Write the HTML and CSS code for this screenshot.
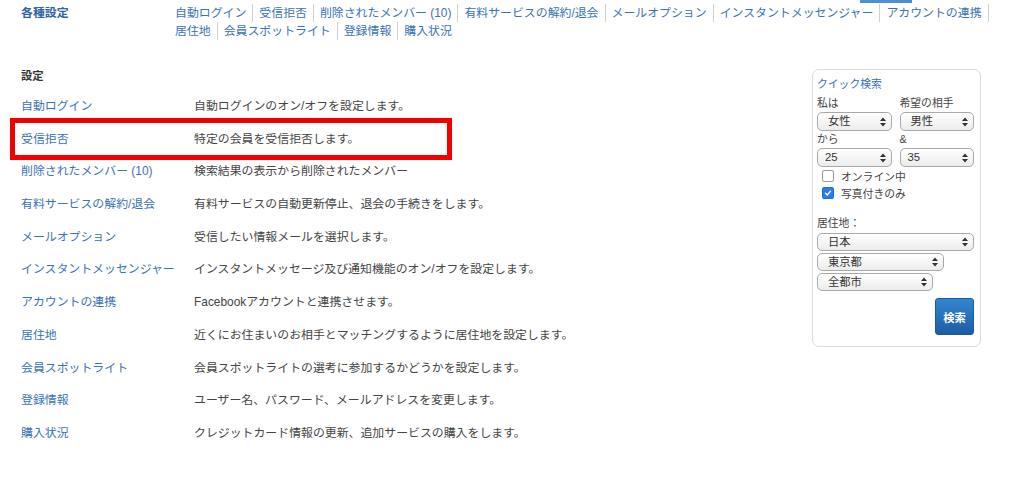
FILE: index.html
```html
<!DOCTYPE html>
<html lang="ja">
<head>
<meta charset="utf-8">
<title>各種設定</title>
<link rel="stylesheet" href="styles.css">
</head>
<body>
<div class="page">
  <div class="tab-indicator"></div>
  <header class="header">
    <div class="title">各種設定</div>
    <nav class="nav">
      <a class="nav-item">自動ログイン</a>
      <a class="nav-item">受信拒否</a>
      <a class="nav-item">削除されたメンバー (10)</a>
      <a class="nav-item">有料サービスの解約/退会</a>
      <a class="nav-item">メールオプション</a>
      <a class="nav-item">インスタントメッセンジャー</a>
      <a class="nav-item">アカウントの連携</a>
      <a class="nav-item">居住地</a>
      <a class="nav-item">会員スポットライト</a>
      <a class="nav-item">登録情報</a>
      <a class="nav-item">購入状況</a>
    </nav>
  </header>

  <main class="main">
    <section class="settings">
      <h2 class="settings-heading">設定</h2>
      <div class="row"><a class="row-link">自動ログイン</a><span class="row-desc">自動ログインのオン/オフを設定します。</span></div>
      <div class="row row-marked"><a class="row-link">受信拒否</a><span class="row-desc">特定の会員を受信拒否します。</span><span class="highlight"></span></div>
      <div class="row"><a class="row-link">削除されたメンバー (10)</a><span class="row-desc">検索結果の表示から削除されたメンバー</span></div>
      <div class="row"><a class="row-link">有料サービスの解約/退会</a><span class="row-desc">有料サービスの自動更新停止、退会の手続きをします。</span></div>
      <div class="row"><a class="row-link">メールオプション</a><span class="row-desc">受信したい情報メールを選択します。</span></div>
      <div class="row"><a class="row-link">インスタントメッセンジャー</a><span class="row-desc">インスタントメッセージ及び通知機能のオン/オフを設定します。</span></div>
      <div class="row"><a class="row-link">アカウントの連携</a><span class="row-desc">Facebookアカウントと連携させます。</span></div>
      <div class="row"><a class="row-link">居住地</a><span class="row-desc">近くにお住まいのお相手とマッチングするように居住地を設定します。</span></div>
      <div class="row"><a class="row-link">会員スポットライト</a><span class="row-desc">会員スポットライトの選考に参加するかどうかを設定します。</span></div>
      <div class="row"><a class="row-link">登録情報</a><span class="row-desc">ユーザー名、パスワード、メールアドレスを変更します。</span></div>
      <div class="row"><a class="row-link">購入状況</a><span class="row-desc">クレジットカード情報の更新、追加サービスの購入をします。</span></div>
    </section>

    <aside class="quick">
      <div class="quick-title">クイック検索</div>
      <div class="pair">
        <div class="field">
          <div class="label">私は</div>
          <div class="sel sel-half"><span>女性</span><svg class="arr" viewBox="0 0 6 10" width="6" height="10"><path d="M0 4 L3 0.5 L6 4 Z M0 6 L3 9.5 L6 6 Z" fill="#333"/></svg></div>
        </div>
        <div class="field">
          <div class="label">希望の相手</div>
          <div class="sel sel-half"><span>男性</span><svg class="arr" viewBox="0 0 6 10" width="6" height="10"><path d="M0 4 L3 0.5 L6 4 Z M0 6 L3 9.5 L6 6 Z" fill="#333"/></svg></div>
        </div>
      </div>
      <div class="pair">
        <div class="field">
          <div class="label">から</div>
          <div class="sel sel-half sel-num"><span>25</span><svg class="arr" viewBox="0 0 6 10" width="6" height="10"><path d="M0 4 L3 0.5 L6 4 Z M0 6 L3 9.5 L6 6 Z" fill="#333"/></svg></div>
        </div>
        <div class="field">
          <div class="label">&amp;</div>
          <div class="sel sel-half sel-num"><span>35</span><svg class="arr" viewBox="0 0 6 10" width="6" height="10"><path d="M0 4 L3 0.5 L6 4 Z M0 6 L3 9.5 L6 6 Z" fill="#333"/></svg></div>
        </div>
      </div>
      <div class="check"><span class="box"></span>オンライン中</div>
      <div class="check"><span class="box box-on"><svg viewBox="0 0 12 12" width="12" height="12"><path d="M3 6.3 L5.1 8.4 L9 3.8" fill="none" stroke="#fff" stroke-width="1.7" stroke-linecap="round" stroke-linejoin="round"/></svg></span>写真付きのみ</div>
      <div class="label label-area">居住地：</div>
      <div class="sel sel-full"><span>日本</span><svg class="arr" viewBox="0 0 6 10" width="6" height="10"><path d="M0 4 L3 0.5 L6 4 Z M0 6 L3 9.5 L6 6 Z" fill="#333"/></svg></div>
      <div class="sel sel-pref"><span>東京都</span><svg class="arr" viewBox="0 0 6 10" width="6" height="10"><path d="M0 4 L3 0.5 L6 4 Z M0 6 L3 9.5 L6 6 Z" fill="#333"/></svg></div>
      <div class="sel sel-city"><span>全都市</span><svg class="arr" viewBox="0 0 6 10" width="6" height="10"><path d="M0 4 L3 0.5 L6 4 Z M0 6 L3 9.5 L6 6 Z" fill="#333"/></svg></div>
      <div class="actions"><button class="search-btn">検索</button></div>
    </aside>
  </main>
</div>
</body>
</html>
```

FILE: styles.css
```css
* { box-sizing: border-box; }

html, body {
  margin: 0;
  padding: 0;
  background: #fff;
}

body {
  font-family: "Liberation Sans", "Noto Sans CJK JP", sans-serif;
  font-size: 11.9px;
  color: #444;
}

a { color: #3a72b6; text-decoration: none; }

.page {
  position: relative;
  padding: 4px 0 0 21px;
  width: 1024px;
}

.tab-indicator {
  position: absolute;
  left: 860px;
  top: 0;
  width: 52px;
  height: 3px;
  background: #4d8fd6;
}

/* header */
.header {
  display: flex;
  align-items: flex-start;
}

.title {
  width: 148px;
  line-height: 18px;
  font-weight: bold;
  color: #2f639f;
}

.nav {
  display: flex;
  flex-wrap: wrap;
  width: 830px;
}

.nav-item {
  line-height: 18px;
  padding: 0 6px;
  border-right: 1px solid #d0d0d0;
  white-space: nowrap;
}

.nav-item:last-child { border-right: none; }

/* main */
.main {
  display: flex;
  align-items: flex-start;
  margin-top: 28px;
}

.settings {
  width: 791px;
}

.settings-heading {
  margin: 0 0 5px;
  font-size: 11.3px;
  line-height: 17px;
  font-weight: bold;
  color: #333;
}

.row {
  position: relative;
  display: flex;
  height: 32.7px;
  line-height: 32.7px;
  white-space: nowrap;
}

.row-link {
  width: 173px;
  flex: none;
}

.row-desc {
  color: #444;
}

.highlight {
  position: absolute;
  left: -11px;
  top: -5px;
  width: 442px;
  height: 42px;
  border: 5px solid #f40000;
  pointer-events: none;
}

/* quick search */
.quick {
  width: 169px;
  margin-top: 1px;
  padding: 6px 6px 11px 4px;
  border: 1px solid #dcdcdc;
  border-radius: 7px;
  font-size: 10.8px;
}

.quick-title {
  line-height: 17px;
  color: #3a72b6;
  margin-bottom: 2px;
}

.pair {
  display: flex;
  gap: 8px;
}

.field { flex: 1; }

.label {
  line-height: 17px;
  color: #444;
}

.sel {
  display: flex;
  align-items: center;
  justify-content: space-between;
  height: 19px;
  padding: 0 5px 0 10px;
  border: 1px solid #a9a9a9;
  border-radius: 5px;
  background: linear-gradient(#ffffff, #ececec);
  color: #333;
  font-size: 11.3px;
  line-height: 17px;
  box-shadow: inset 0 1px 0 #fff;
}

.sel-num { padding-left: 7px; }

.sel-half { width: 100%; }
.sel-full { width: 157px; height: 18px; margin-top: 1px; }
.sel-pref { width: 127px; height: 18px; margin-top: 2px; }
.sel-city { width: 116px; height: 18px; margin-top: 2px; }

.arr { flex: none; }

.check {
  display: flex;
  align-items: center;
  height: 17px;
  padding-left: 5px;
  color: #444;
}

.box {
  width: 12px;
  height: 12px;
  border: 1px solid #9a9a9a;
  border-radius: 2px;
  background: #fff;
  margin-right: 7px;
  display: flex;
  align-items: center;
  justify-content: center;
}

.box-on {
  border-color: #1f6fd8;
  background: #2a7be4;
}

.label-area { margin-top: 14px; }

.actions {
  display: flex;
  justify-content: flex-end;
  margin-top: 7px;
}

.search-btn {
  width: 39px;
  height: 37px;
  border: 1px solid #1b5a9a;
  border-radius: 3px;
  background: linear-gradient(#3286d1, #1c5da3);
  color: #fff;
  font-family: inherit;
  font-size: 11.3px;
  font-weight: bold;
  padding: 0;
}
```
